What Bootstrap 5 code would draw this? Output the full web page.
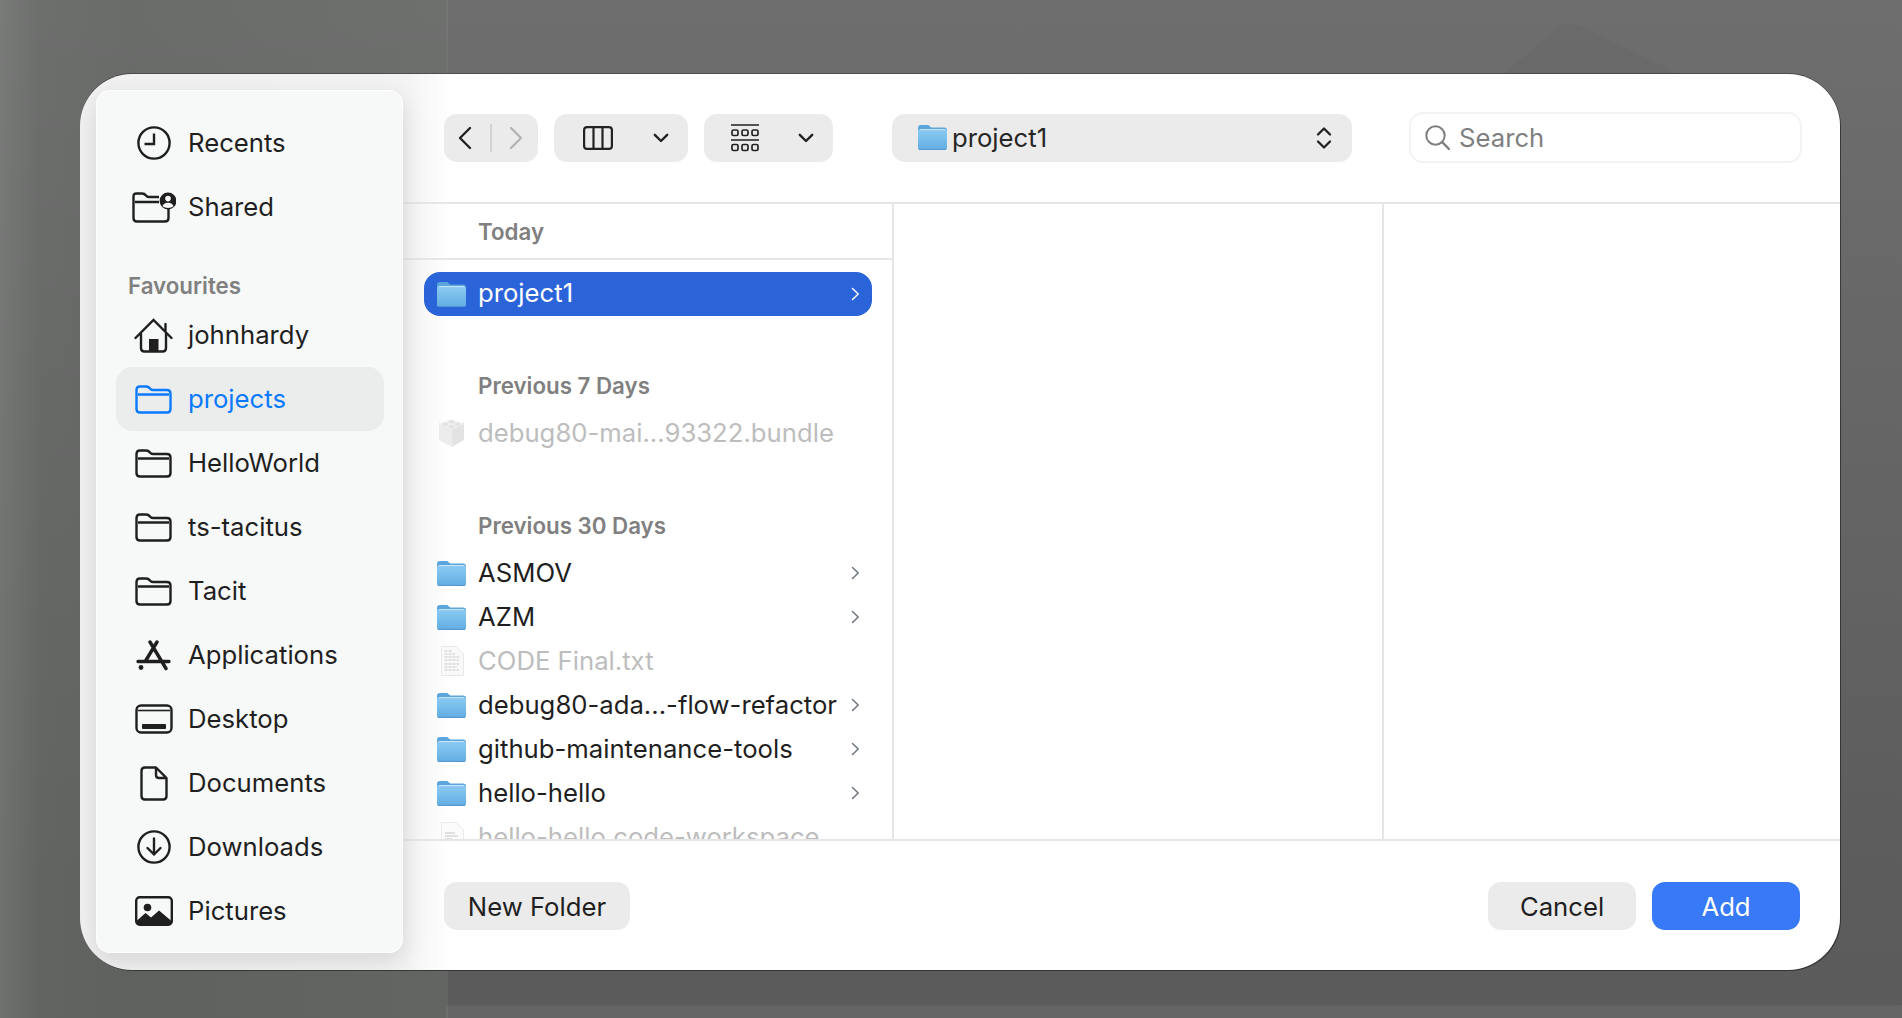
<!DOCTYPE html>
<html lang="en">
<head>
  <meta charset="UTF-8">
  <meta name="viewport" content="width=device-width, initial-scale=1">
  <title>Add folder</title>
  <link href="https://cdn.jsdelivr.net/npm/bootstrap@5.3.3/dist/css/bootstrap.min.css" rel="stylesheet">
  <style>
    html, body {
      height: 100%;
    }
    body {
      font-family: Inter, "Liberation Sans", sans-serif;
      font-size: 25.7px;
      color: #1f1f1f;
      overflow: hidden;
      background-color: #646564;
      background-image:
        linear-gradient(90deg, transparent 446px, rgba(255,255,255,.05) 446px, rgba(255,255,255,.05) 448px, transparent 448px),
        linear-gradient(180deg, rgba(255,255,255,.07) 0, rgba(255,255,255,0) 900px),
        linear-gradient(90deg, #6f716f 0, #626462 40px, #5f615f 130px, #636563 446px, transparent 446px),
        linear-gradient(180deg, #636363 0, #5b5b5b 1005px, #636463 1006px, #646564 100%);
      padding: 74px 62px 48px 80px;
    }
    svg {
      display: block;
      flex: none;
    }
    .wall-peak {
      position: absolute;
      left: 1495px;
      top: 17px;
      z-index: -1;
    }
    .dlg-window {
      height: 896px;
      background: linear-gradient(90deg, #f1f1f1 0, #f3f3f3 325px, #fff 372px);
      border-radius: 52px;
      overflow: hidden;
      box-shadow: 1px 1px 0 rgba(30,30,30,.65), 0 -1px 0 rgba(30,30,30,.4);
    }
    .side-panel {
      width: 307px;
      margin: 16px 0 17px 16px;
      padding-top: 21px;
      background: #f7f8f8;
      border-radius: 14px;
      position: relative;
      z-index: 2;
      box-shadow: 0 8px 24px rgba(0,0,0,.12), inset 0 0 0 1px rgba(255,255,255,.75);
    }
    .side-row {
      height: 64px;
      margin: 0 19px 0 20px;
      border-radius: 16px;
    }
    .side-row.on {
      background: #ebecec;
      color: #0a7aff;
    }
    .side-ico {
      width: 72px;
      padding-left: 3px;
    }
    .side-head {
      height: 64px;
      padding: 0 0 0 32px;
      line-height: 34px;
      font-size: 22.3px;
      font-weight: 600;
      color: #808080;
    }
    .dlg-main {
      min-width: 0;
    }
    .tool-bar {
      height: 130px;
      padding: 38px 0 39px 41px;
      border-bottom: 2px solid #e6e6e6;
    }
    .tool-btn {
      height: 48px;
      background: #ebebeb;
      border-radius: 13px;
    }
    .back-btn { width: 94px; padding: 0 15px 0 14px; }
    .back-btn i {
      width: 2px;
      height: 28px;
      background: #d2d2d2;
    }
    .view-btn { width: 134px; margin-left: 16px; padding: 0 19px 0 29px; }
    .group-btn { width: 129px; margin-left: 16px; padding: 0 19px 0 27px; }
    .path-btn {
      width: 460px;
      margin-left: 59px;
      padding: 0 20px 0 26px;
      color: #262626;
    }
    .path-btn span { margin: 2px 0 0 5px; }
    .search-box {
      width: 393px;
      height: 51px;
      margin-left: 57px;
      padding-left: 14px;
      border: 2px solid #f3f3f3;
      border-radius: 14px;
      color: #7f7f7f;
    }
    .search-box span { margin: 2px 0 0 9px; }
    .file-browser {
      min-height: 0;
      overflow: hidden;
    }
    .file-col {
      width: 491px;
      border-right: 2px solid #e6e6e6;
    }
    .file-col + .file-col {
      width: 490px;
    }
    .date-first {
      height: 56px;
      padding: 2px 0 0 75px;
      border-bottom: 2px solid #e6e6e6;
      margin-bottom: 12px;
      font-size: 22.3px;
      font-weight: 600;
      color: #808080;
    }
    .date-head {
      height: 34px;
      line-height: 34px;
      padding-left: 75px;
      margin: 53px 0 8px;
      font-size: 22.3px;
      font-weight: 600;
      color: #808080;
    }
    .date-head + .file-row + .date-head {
      margin-top: 54px;
    }
    .file-row {
      height: 44px;
      margin: 0 20px 0 21px;
      padding: 0 12px 0 13px;
      border-radius: 16px;
      white-space: nowrap;
    }
    .file-row.on {
      background: #2b63d9;
      color: #fff;
    }
    .file-row.on span {
      margin-top: -2px;
    }
    .file-row.off {
      color: #bdbdbd;
    }
    .file-ico {
      width: 29px;
      margin-right: 12px;
    }
    .dlg-foot {
      height: 131px;
      padding: 41px 40px 0 41px;
      border-top: 2px solid #e6e6e6;
    }
    .foot-btn {
      height: 48px;
      padding: 0;
      border: 0;
      border-radius: 13px;
      background: #ebebeb;
      color: #1f1f1f;
      font-size: 25.7px;
      line-height: 50px;
      text-align: center;
    }
    .foot-wide { width: 186px; }
    .foot-act { width: 148px; margin-left: 16px; }
    .foot-add {
      background: #3779f6;
      color: #fff;
    }
  </style>
</head>
<body>

  <svg width="0" height="0" style="position:absolute">
    <defs>
      <linearGradient id="blueFace" x1="0" y1="0" x2="0" y2="1">
        <stop offset="0" stop-color="#8ccbf3"/>
        <stop offset="1" stop-color="#62ade2"/>
      </linearGradient>
      <symbol id="folderLine" viewBox="0 0 37 29">
        <path d="M1.5 6V5Q1.5 1.5 5 1.5H11Q13.5 1.5 15 3.5Q16 5 18 5H32Q35.5 5 35.5 8.5V24Q35.5 27.5 32 27.5H5Q1.5 27.5 1.5 24Z M3 9.5H34" fill="none" stroke="currentColor" stroke-width="2.4"/>
      </symbol>
      <symbol id="folderBlue" viewBox="0 0 29 25">
        <path d="M0 3Q0 0 3 0H9Q11 0 12 1.4Q13 2.6 15 2.6H26Q29 2.6 29 5.6V10H0Z" fill="#5aa6dc"/>
        <rect x="0" y="4" width="29" height="21" rx="2.6" fill="url(#blueFace)"/>
        <path d="M2 4.6H27" stroke="#e6f4fc" stroke-opacity=".7" stroke-width="1"/>
        <path d="M1 24.4H28" stroke="#4a8fc4" stroke-opacity=".7" stroke-width="1"/>
      </symbol>
      <symbol id="chevSmall" viewBox="0 0 9 14">
        <path d="M1.5 1.5L7.2 7L1.5 12.5" fill="none" stroke="currentColor" stroke-width="1.5" stroke-linecap="round" stroke-linejoin="round"/>
      </symbol>
      <symbol id="chevDown" viewBox="0 0 16 10">
        <path d="M1.8 1.8L8 8L14.2 1.8" fill="none" stroke="#222" stroke-width="2.4" stroke-linecap="round" stroke-linejoin="round"/>
      </symbol>
    </defs>
  </svg>

  <!-- faint wallpaper shape behind the dialog -->
  <svg class="wall-peak" width="200" height="60" viewBox="0 0 200 60"><path d="M6 60L60 12Q73 2 88 10L190 60Z" fill="#000" fill-opacity=".025"/></svg>

  <div class="dlg-window d-flex">

    <!-- sidebar -->
    <div class="side-panel flex-shrink-0">
      <div class="side-row d-flex align-items-center">
        <div class="side-ico d-flex justify-content-center">
          <svg width="34" height="34" viewBox="0 0 34 34" fill="none" stroke="#1f1f1f" stroke-width="2.4"><circle cx="17" cy="17" r="15.6"/><path d="M17 7.5V18H7.5"/></svg>
        </div>
        <span>Recents</span>
      </div>
      <div class="side-row d-flex align-items-center">
        <div class="side-ico d-flex justify-content-center">
          <svg width="44" height="31" viewBox="0 0 44 31" fill="none" stroke="#1f1f1f" stroke-width="2.4"><path d="M1.5 6V4.5Q1.5 1.5 4.5 1.5H10Q12.5 1.5 14 3.5Q15 5 17 5H27 M36.5 16V26Q36.5 29.5 33 29.5H5Q1.5 29.5 1.5 26V6 M3 10H27"/><circle cx="36" cy="9" r="8.4" fill="#1f1f1f" stroke="none"/><circle cx="36" cy="6.6" r="2.8" fill="#f7f8f8" stroke="none"/><path d="M30.4 14.2Q32 10.8 36 10.8Q40 10.8 41.6 14.2Q39.4 16 36 16Q32.6 16 30.4 14.2Z" fill="#f7f8f8" stroke="none"/></svg>
        </div>
        <span>Shared</span>
      </div>
      <div class="side-head d-flex align-items-end">Favourites</div>
      <div class="side-row d-flex align-items-center">
        <div class="side-ico d-flex justify-content-center">
          <svg width="39" height="35" viewBox="0 0 39 35" fill="none" stroke="#1f1f1f" stroke-width="2.4" stroke-linecap="round"><path d="M1.5 20L19.5 2L37.5 20 M31.5 6V13 M7 16V30Q7 33.5 10.5 33.5H28.5Q32 33.5 32 30V16"/><rect x="15" y="21" width="9.5" height="12.5" fill="#1f1f1f" stroke="none"/></svg>
        </div>
        <span>johnhardy</span>
      </div>
      <div class="side-row on d-flex align-items-center">
        <div class="side-ico d-flex justify-content-center">
          <svg width="37" height="29"><use href="#folderLine"/></svg>
        </div>
        <span>projects</span>
      </div>
      <div class="side-row d-flex align-items-center">
        <div class="side-ico d-flex justify-content-center"><svg width="37" height="29"><use href="#folderLine"/></svg></div>
        <span>HelloWorld</span>
      </div>
      <div class="side-row d-flex align-items-center">
        <div class="side-ico d-flex justify-content-center"><svg width="37" height="29"><use href="#folderLine"/></svg></div>
        <span>ts-tacitus</span>
      </div>
      <div class="side-row d-flex align-items-center">
        <div class="side-ico d-flex justify-content-center"><svg width="37" height="29"><use href="#folderLine"/></svg></div>
        <span>Tacit</span>
      </div>
      <div class="side-row d-flex align-items-center">
        <div class="side-ico d-flex justify-content-center">
          <svg width="35" height="31" viewBox="0 0 35 31" fill="none" stroke="#1f1f1f" stroke-width="3.4" stroke-linecap="round"><path d="M14 2L30 28.5 M21 2L9.5 21 M2 21.5H33"/><circle cx="5" cy="27.5" r="2.4" fill="#1f1f1f" stroke="none"/></svg>
        </div>
        <span>Applications</span>
      </div>
      <div class="side-row d-flex align-items-center">
        <div class="side-ico d-flex justify-content-center">
          <svg width="38" height="30" viewBox="0 0 38 30" fill="none" stroke="#1f1f1f" stroke-width="2.4"><rect x="1.5" y="1.5" width="35" height="27" rx="4.5"/><path d="M3 6.5H35" stroke-width="1.6"/><rect x="7" y="20" width="24" height="5" rx="1" fill="#1f1f1f" stroke="none"/></svg>
        </div>
        <span>Desktop</span>
      </div>
      <div class="side-row d-flex align-items-center">
        <div class="side-ico d-flex justify-content-center">
          <svg width="28" height="35" viewBox="0 0 28 35" fill="none" stroke="#1f1f1f" stroke-width="2.4" stroke-linejoin="round"><path d="M5 1.5H16L26.5 12V30Q26.5 33.5 23 33.5H5Q1.5 33.5 1.5 30V5Q1.5 1.5 5 1.5Z M16 1.5V9Q16 12 19 12H26.5"/></svg>
        </div>
        <span>Documents</span>
      </div>
      <div class="side-row d-flex align-items-center">
        <div class="side-ico d-flex justify-content-center">
          <svg width="34" height="34" viewBox="0 0 34 34" fill="none" stroke="#1f1f1f" stroke-width="2.4" stroke-linecap="round" stroke-linejoin="round"><circle cx="17" cy="17" r="15.6"/><path d="M17 8.5V24.5 M10.5 18L17 24.5L23.5 18"/></svg>
        </div>
        <span>Downloads</span>
      </div>
      <div class="side-row d-flex align-items-center">
        <div class="side-ico d-flex justify-content-center">
          <svg width="38" height="30" viewBox="0 0 38 30" fill="none" stroke="#1f1f1f" stroke-width="2.4"><rect x="1.2" y="1.2" width="35.6" height="27.6" rx="3.5"/><circle cx="12.5" cy="11.5" r="3.8" fill="#1f1f1f" stroke="none"/><path d="M1.5 25L10.5 17L16 21.5L24 14.5L36.5 25V26Q36.5 29 33.5 29H4.5Q1.5 29 1.5 26Z" fill="#1f1f1f" stroke="none"/></svg>
        </div>
        <span>Pictures</span>
      </div>
    </div>

    <div class="dlg-main flex-grow-1 d-flex flex-column">

      <!-- toolbar -->
      <div class="tool-bar d-flex align-items-center flex-shrink-0">
        <div class="tool-btn back-btn d-flex align-items-center justify-content-between">
          <svg width="14" height="24" viewBox="0 0 14 24" fill="none" stroke="#222" stroke-width="2.4" stroke-linecap="round" stroke-linejoin="round"><path d="M12 2L2 12L12 22"/></svg>
          <i></i>
          <svg width="14" height="24" viewBox="0 0 14 24" fill="none" stroke="#b4b4b4" stroke-width="2.4" stroke-linecap="round" stroke-linejoin="round"><path d="M2 2L12 12L2 22"/></svg>
        </div>
        <div class="tool-btn view-btn d-flex align-items-center justify-content-between">
          <svg width="30" height="24" viewBox="0 0 30 24" fill="none" stroke="#222" stroke-width="2.2"><rect x="1.1" y="1.1" width="27.8" height="21.8" rx="3"/><path d="M10.5 1.5V22.5 M19.5 1.5V22.5"/></svg>
          <svg width="16" height="10"><use href="#chevDown"/></svg>
        </div>
        <div class="tool-btn group-btn d-flex align-items-center justify-content-between">
          <svg width="28" height="28" viewBox="0 0 28 28" fill="none" stroke="#222" stroke-width="1.7"><path d="M0 1H28 M0 16H28"/><rect x="1" y="6" width="6" height="5.5" rx="1.5"/><rect x="11" y="6" width="6" height="5.5" rx="1.5"/><rect x="21" y="6" width="6" height="5.5" rx="1.5"/><rect x="1" y="20.5" width="6" height="6" rx="1.5"/><rect x="11" y="20.5" width="6" height="6" rx="1.5"/><rect x="21" y="20.5" width="6" height="6" rx="1.5"/></svg>
          <svg width="16" height="10"><use href="#chevDown"/></svg>
        </div>
        <div class="tool-btn path-btn d-flex align-items-center">
          <svg width="29" height="25"><use href="#folderBlue"/></svg>
          <span>project1</span>
          <svg class="ms-auto" width="16" height="24" viewBox="0 0 16 24" fill="none" stroke="#222" stroke-width="2.3" stroke-linecap="round" stroke-linejoin="round"><path d="M2 8.5L8 2.5L14 8.5 M2 15.5L8 21.5L14 15.5"/></svg>
        </div>
        <div class="search-box d-flex align-items-center">
          <svg width="25" height="25" viewBox="0 0 25 25" fill="none" stroke="#7f7f7f" stroke-width="2" stroke-linecap="round"><circle cx="10.5" cy="10.5" r="9.2"/><path d="M17.2 17.2L24 24" stroke-width="2.4"/></svg>
          <span>Search</span>
        </div>
      </div>

      <!-- columns -->
      <div class="file-browser flex-grow-1 d-flex">
        <div class="file-col flex-shrink-0">
          <div class="date-first d-flex align-items-center">Today</div>
          <div class="file-row on d-flex align-items-center">
            <div class="file-ico"><svg width="29" height="25"><use href="#folderBlue"/></svg></div>
            <span>project1</span>
            <svg class="ms-auto text-white" width="9" height="14"><use href="#chevSmall"/></svg>
          </div>

          <div class="date-head">Previous 7 Days</div>
          <div class="file-row off d-flex align-items-center">
            <div class="file-ico d-flex justify-content-center">
              <svg width="27" height="28" viewBox="0 0 27 28"><path d="M13.5 8L26 3.5V21L13.5 28Z" fill="#e3e3e3"/><path d="M13.5 8L1 3.5V21L13.5 28Z" fill="#ececec"/><path d="M13.5 0L26 5L13.5 10.5L1 5Z" fill="#f1f1f1"/><ellipse cx="13.5" cy="2.8" rx="3" ry="1.6" fill="#e2e2e2"/><ellipse cx="7.5" cy="5.2" rx="3" ry="1.6" fill="#e2e2e2"/><ellipse cx="19.5" cy="5.2" rx="3" ry="1.6" fill="#e2e2e2"/><ellipse cx="13.5" cy="7.6" rx="3" ry="1.6" fill="#e2e2e2"/></svg>
            </div>
            <span>debug80-mai...93322.bundle</span>
          </div>

          <div class="date-head">Previous 30 Days</div>
          <div class="file-row d-flex align-items-center">
            <div class="file-ico"><svg width="29" height="25"><use href="#folderBlue"/></svg></div>
            <span>ASMOV</span>
            <svg class="ms-auto text-secondary" width="9" height="14"><use href="#chevSmall"/></svg>
          </div>
          <div class="file-row d-flex align-items-center">
            <div class="file-ico"><svg width="29" height="25"><use href="#folderBlue"/></svg></div>
            <span>AZM</span>
            <svg class="ms-auto text-secondary" width="9" height="14"><use href="#chevSmall"/></svg>
          </div>
          <div class="file-row off d-flex align-items-center">
            <div class="file-ico d-flex justify-content-center">
              <svg width="24" height="30" viewBox="0 0 24 30"><path d="M1.5 0.5H16L23.5 8V29.5H1.5Z" fill="#f9f9f9" stroke="#e8e8e8"/><path d="M4.5 5H12 M4.5 8H15 M4.5 11H19 M4.5 14H19 M4.5 18H19 M4.5 21H17 M4.5 24H19" stroke="#d8d8d8" stroke-width="1.5" stroke-dasharray="3 1"/></svg>
            </div>
            <span>CODE Final.txt</span>
          </div>
          <div class="file-row d-flex align-items-center">
            <div class="file-ico"><svg width="29" height="25"><use href="#folderBlue"/></svg></div>
            <span>debug80-ada...-flow-refactor</span>
            <svg class="ms-auto text-secondary" width="9" height="14"><use href="#chevSmall"/></svg>
          </div>
          <div class="file-row d-flex align-items-center">
            <div class="file-ico"><svg width="29" height="25"><use href="#folderBlue"/></svg></div>
            <span>github-maintenance-tools</span>
            <svg class="ms-auto text-secondary" width="9" height="14"><use href="#chevSmall"/></svg>
          </div>
          <div class="file-row d-flex align-items-center">
            <div class="file-ico"><svg width="29" height="25"><use href="#folderBlue"/></svg></div>
            <span>hello-hello</span>
            <svg class="ms-auto text-secondary" width="9" height="14"><use href="#chevSmall"/></svg>
          </div>
          <div class="file-row off d-flex align-items-center">
            <div class="file-ico d-flex justify-content-center">
              <svg width="24" height="30" viewBox="0 0 24 30"><path d="M1.5 0.5H16L23.5 8V29.5H1.5Z" fill="#fbfbfb" stroke="#eaeaea"/><path d="M5 11H15 M5 14H18 M5 17H12" stroke="#d8d8d8" stroke-width="1.5"/></svg>
            </div>
            <span>hello-hello.code-workspace</span>
          </div>
        </div>
        <div class="file-col flex-shrink-0"></div>
        <div class="flex-grow-1"></div>
      </div>

      <!-- footer -->
      <div class="dlg-foot d-flex flex-shrink-0">
        <button type="button" class="btn foot-btn foot-wide">New Folder</button>
        <button type="button" class="btn foot-btn foot-act ms-auto">Cancel</button>
        <button type="button" class="btn foot-btn foot-act foot-add">Add</button>
      </div>
    </div>
  </div>

  <script src="https://cdn.jsdelivr.net/npm/bootstrap@5.3.3/dist/js/bootstrap.bundle.min.js"></script>
</body>
</html>
